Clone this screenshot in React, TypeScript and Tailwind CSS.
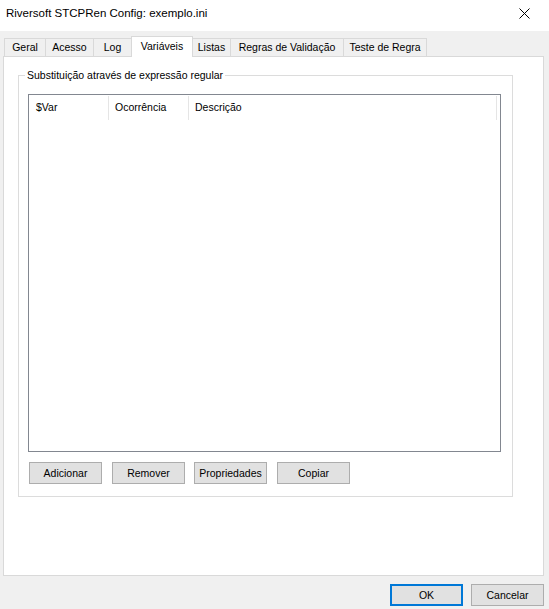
import React from 'react';

const tabs = [
  { label: 'Geral', w: 'w-[41px]' },
  { label: 'Acesso', w: 'w-[48px]' },
  { label: 'Log', w: 'w-[38px]' },
  { label: 'Variáveis', w: 'w-[62px]', active: true },
  { label: 'Listas', w: 'w-[37px]' },
  { label: 'Regras de Validação', w: 'w-[113px]' },
  { label: 'Teste de Regra', w: 'w-[84px]' },
];

const Button: React.FC<{ label: string; primary?: boolean; className?: string }> = ({ label, primary, className = '' }) => (
  <button
    className={`h-[22px] w-[73px] bg-[#e1e1e1] text-black leading-none ${primary ? 'border-2 border-[#0078d7]' : 'border border-[#adadad]'} ${className}`}
  >
    {label}
  </button>
);

const App: React.FC = () => {
  return (
    <div
      className="w-[549px] h-[609px] bg-[#f0f0f0] flex flex-col text-[10.5px] text-black overflow-hidden"
      style={{ fontFamily: '"Liberation Sans", Arial, sans-serif' }}
    >
      {/* Title bar */}
      <div className="h-[31px] bg-white flex items-center justify-between pl-[6px] pr-[19px] shrink-0">
        <span className="text-[11.5px] -mt-[4px]">Riversoft STCPRen Config: exemplo.ini</span>
        <svg width="11" height="11" viewBox="0 0 11 11" className="-mt-[4px]">
          <path d="M0.5 0.5 L10.5 10.5 M10.5 0.5 L0.5 10.5" stroke="#000" strokeWidth="1" />
        </svg>
      </div>

      {/* Tab strip */}
      <div className="flex items-end h-[25px] pl-[4px] relative z-10">
        {tabs.map((t, i) => {
          const afterActive = i > 0 && tabs[i - 1].active;
          if (t.active) {
            return (
              <div
                key={t.label}
                className={`${t.w} h-[21px] -mb-[1px] bg-white border border-b-0 border-[#d9d9d9] flex items-start justify-center pt-[2px]`}
              >
                {t.label}
              </div>
            );
          }
          return (
            <div
              key={t.label}
              className={`${t.w} h-[18px] bg-[#f0f0f0] border-t border-[#d9d9d9] ${afterActive ? '' : 'border-l'} ${i === tabs.length - 1 ? 'border-r' : ''} flex items-center justify-center pt-[1px]`}
            >
              {t.label}
            </div>
          );
        })}
      </div>

      {/* Tab page */}
      <div className="ml-[3px] w-[541px] h-[520px] bg-white border border-[#d9d9d9] pt-[11px] pl-[14px]">
        <fieldset className="w-[495px] border border-[#dcdcdc] px-[9px] pb-[12px]">
          <legend className="-ml-[3px] px-[2px] leading-[14px]">Substituição através de expressão regular</legend>

          {/* List view */}
          <div className="mt-[12px] w-[473px] h-[358px] border border-[#828790] bg-white">
            <div className="flex h-[26px] items-stretch">
              <div className="w-[80px] border-r border-[#e5e5e5] my-[1px] flex items-center pl-[7px]">$Var</div>
              <div className="w-[80px] border-r border-[#e5e5e5] my-[1px] flex items-center pl-[6px]">Ocorrência</div>
              <div className="w-[308px] border-r border-[#e5e5e5] my-[1px] flex items-center pl-[6px]">Descrição</div>
            </div>
          </div>

          <div className="flex mt-[10px] pl-[1px]">
            <Button label="Adicionar" />
            <Button label="Remover" className="ml-[10px]" />
            <Button label="Propriedades" className="ml-[9px]" />
            <Button label="Copiar" className="ml-[10px]" />
          </div>
        </fieldset>
      </div>

      {/* Dialog buttons */}
      <div className="flex justify-end gap-[8px] pr-[5px] mt-[8px]">
        <Button label="OK" primary />
        <Button label="Cancelar" />
      </div>
    </div>
  );
};

export default App;
